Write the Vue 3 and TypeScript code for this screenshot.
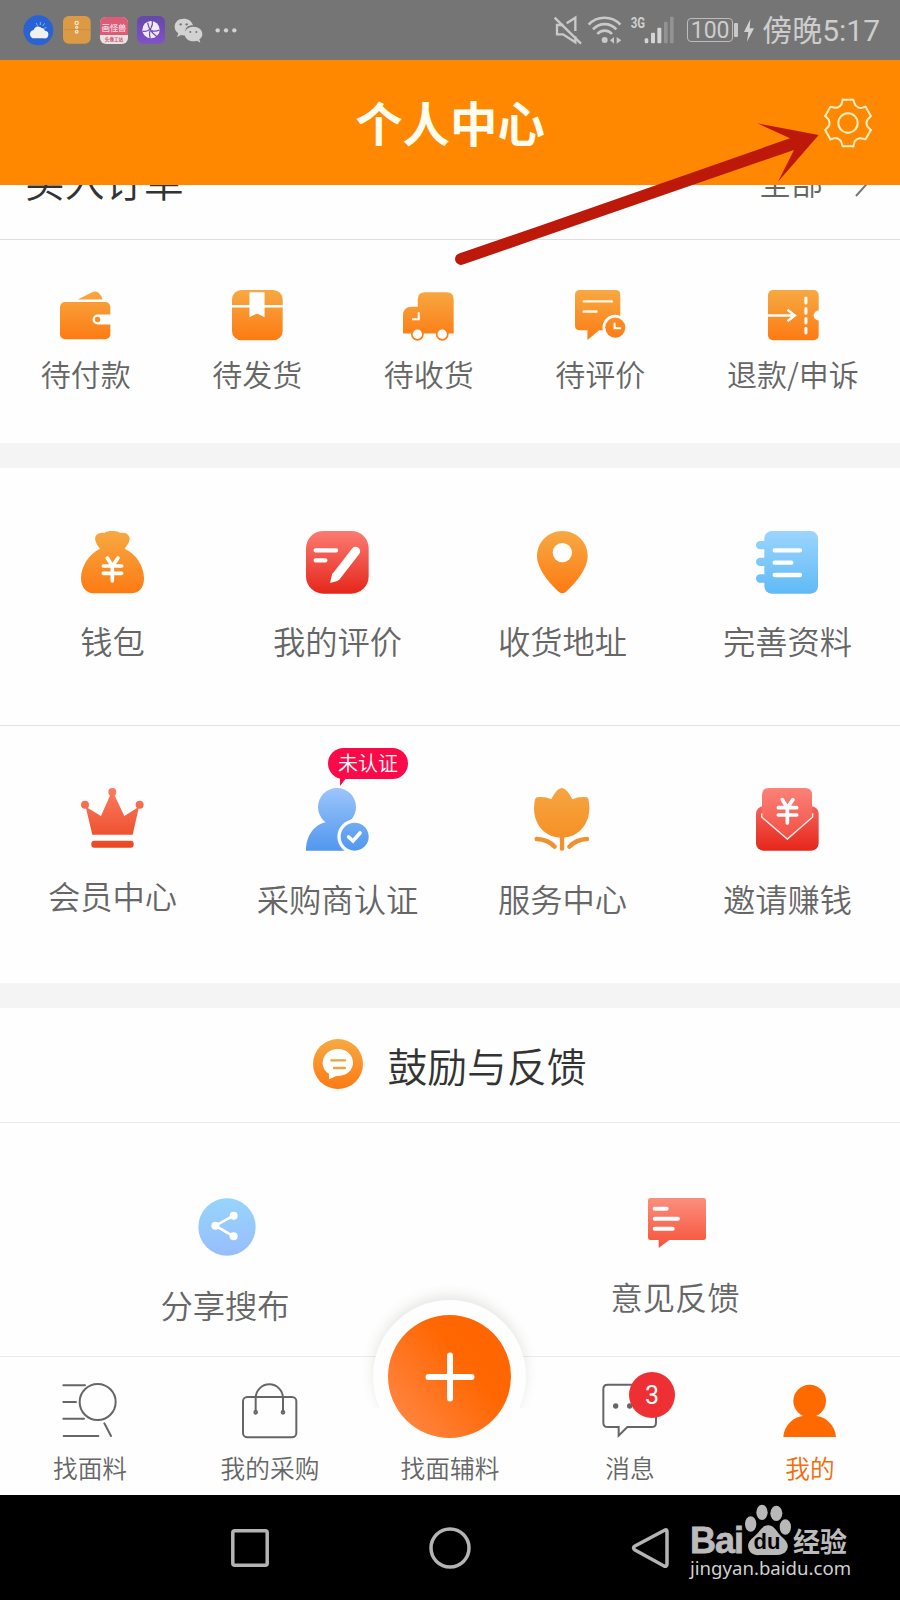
<script setup lang="ts">
interface Item {
  id: string
  label: string
  tag?: string
}

const orders: Item[] = [
  { id: 'wallet', label: '待付款' },
  { id: 'box', label: '待发货' },
  { id: 'truck', label: '待收货' },
  { id: 'comment', label: '待评价' },
  { id: 'ticket', label: '退款/申诉' },
]

const services: Item[][] = [
  [
    { id: 'bag', label: '钱包' },
    { id: 'review', label: '我的评价' },
    { id: 'pin', label: '收货地址' },
    { id: 'notebook', label: '完善资料' },
  ],
  [
    { id: 'crown', label: '会员中心' },
    { id: 'person', label: '采购商认证', tag: '未认证' },
    { id: 'tulip', label: '服务中心' },
    { id: 'envelope', label: '邀请赚钱' },
  ],
]

const tabs: Item[] = [
  { id: 'search', label: '找面料' },
  { id: 'cart', label: '我的采购' },
  { id: 'add', label: '找面辅料' },
  { id: 'message', label: '消息' },
  { id: 'me', label: '我的' },
]

const teeth = [0, 60, 120, 180, 240, 300]
</script>

<template>
  <div class="phone">
    <svg class="defs" width="0" height="0">
      <defs>
        <linearGradient id="g-orange-s" gradientUnits="userSpaceOnUse" x1="0" y1="0" x2="0" y2="150">
          <stop offset="0" stop-color="#f7a943" /><stop offset="1" stop-color="#fd7a12" />
        </linearGradient>
        <linearGradient id="g-orange" gradientUnits="userSpaceOnUse" x1="0" y1="0" x2="0" y2="188">
          <stop offset="0" stop-color="#f7a943" /><stop offset="1" stop-color="#fd7a12" />
        </linearGradient>
        <linearGradient id="g-amber" gradientUnits="userSpaceOnUse" x1="0" y1="0" x2="0" y2="188">
          <stop offset="0" stop-color="#f6a543" /><stop offset="1" stop-color="#f68c1e" />
        </linearGradient>
        <linearGradient id="g-red" gradientUnits="userSpaceOnUse" x1="0" y1="0" x2="0" y2="188">
          <stop offset="0" stop-color="#fc7b72" /><stop offset="1" stop-color="#e5261b" />
        </linearGradient>
        <linearGradient id="g-card" gradientUnits="userSpaceOnUse" x1="0" y1="0" x2="0" y2="188">
          <stop offset="0" stop-color="#fc8278" /><stop offset="1" stop-color="#ef4338" />
        </linearGradient>
        <linearGradient id="g-crown" gradientUnits="userSpaceOnUse" x1="0" y1="0" x2="0" y2="188">
          <stop offset="0" stop-color="#fb7b62" /><stop offset="1" stop-color="#ea451f" />
        </linearGradient>
        <linearGradient id="g-sky" gradientUnits="userSpaceOnUse" x1="0" y1="0" x2="0" y2="188">
          <stop offset="0" stop-color="#9bd5fd" /><stop offset="1" stop-color="#60baf6" />
        </linearGradient>
        <linearGradient id="g-blue" gradientUnits="userSpaceOnUse" x1="0" y1="0" x2="0" y2="188">
          <stop offset="0" stop-color="#9cc5fb" /><stop offset="1" stop-color="#5197ef" />
        </linearGradient>
        <linearGradient id="g-share" x1="0" y1="0" x2="0" y2="1">
          <stop offset="0" stop-color="#96d5fb" /><stop offset="1" stop-color="#98bdfd" />
        </linearGradient>
        <linearGradient id="g-coral" gradientUnits="userSpaceOnUse" x1="0" y1="0" x2="0" y2="150">
          <stop offset="0" stop-color="#fb8f7e" /><stop offset="1" stop-color="#f75238" />
        </linearGradient>
        <linearGradient id="g-purple" x1="0" y1="0" x2="0" y2="1">
          <stop offset="0" stop-color="#6448a8" /><stop offset="1" stop-color="#8250cc" />
        </linearGradient>
      </defs>
    </svg>

    <header class="status">
      <div class="status-apps">
        <svg width="31" height="31" viewBox="0 0 93 93">
          <circle cx="46" cy="46" r="45" fill="#2962d2" />
          <path d="M40 25l3 6M52 22v7M64 26l-4 6M69 38l-6 2" stroke="#8fb0ee" stroke-width="3" stroke-linecap="round" />
          <path d="M35 70a12.500 12.500 0 0 1-3-25a14 14 0 0 1 24-6a11 11 0 0 1 10 8a11.500 11.500 0 0 1-3 23z" fill="#f0f1ee" />
        </svg>
        <svg width="28" height="28" viewBox="0 0 84 84">
          <rect width="83" height="83" rx="17" fill="#dc9a45" />
          <path d="M2 41H82" stroke="#c78634" stroke-width="2" />
          <g fill="none" stroke="#eee2cc" stroke-width="4"><circle cx="41" cy="21" r="5" /><circle cx="41" cy="34" r="3" /><circle cx="41" cy="47" r="4" /></g>
        </svg>
        <div class="mini-app"><span class="mini-top">画怪兽</span><span class="mini-bottom">头像工站</span></div>
        <svg width="28" height="28" viewBox="0 0 84 84">
          <rect width="84" height="83" rx="17" fill="url(#g-purple)" />
          <circle cx="42" cy="41" r="26" fill="#efeaf6" />
          <path d="M18 46Q34 47 42 36Q48 26 46 15M32 20Q36 46 60 62M42 38Q34 52 40 66M44 44Q56 48 67 42" fill="none" stroke="#6d49b5" stroke-width="3.500" />
        </svg>
        <svg width="29" height="25" viewBox="0 0 87 75">
          <path d="M29 2C13 2 2 12 2 26c0 9 4 15 11 20l-4 11 12-6q7 2 14 1C28 32 42 20 57 22 54 10 43 2 29 2z" fill="#d2d2d2" />
          <path d="M58 26c-15 0-26 9-26 22s12 22 26 22q6 0 11-2l10 6-3-10c6-4 9-9 9-16 0-13-12-22-27-22z" fill="#d2d2d2" />
          <g fill="#757575"><circle cx="20" cy="19" r="3.5" /><circle cx="38" cy="19" r="3.5" /><circle cx="49" cy="42" r="3" /><circle cx="67" cy="42" r="3" /></g>
        </svg>
        <svg width="22" height="5" viewBox="0 0 66 15">
          <g fill="#d2d2d2"><circle cx="8" cy="7" r="6.5" /><circle cx="33" cy="7" r="6.5" /><circle cx="58" cy="7" r="6.5" /></g>
        </svg>
      </div>
      <div class="status-info">
        <svg width="120" height="30" viewBox="0 0 360 90">
          <g fill="none" stroke="#c9c9c9" stroke-width="7">
            <path d="M2 8L81 86" />
            <path d="M28 30H9v28h18l37 24V64M38 25L64 8V48" />
            <path d="M104 29a65 65 0 0 1 95 0M117 43a47 47 0 0 1 70 0M130 57a29 29 0 0 1 44 0" stroke-width="8" />
          </g>
          <circle cx="152" cy="75" r="9" fill="#c9c9c9" />
          <path d="M168 76l12-10v20zM188 66l14 10-14 10z" fill="#c9c9c9" />
          <g fill="#d4d4d4"><rect x="272" y="70" width="11" height="15" rx="4" /><rect x="291" y="53" width="12" height="32" rx="3" /><rect x="310" y="38" width="12" height="47" rx="3" /></g>
          <g fill="#939393"><rect x="330" y="20" width="11" height="65" rx="3" /><rect x="348" y="5" width="11" height="80" rx="3" /></g>
          <text class="net" x="230" y="38" textLength="43" lengthAdjust="spacingAndGlyphs">3G</text>
        </svg>
        <div class="battery">100</div>
        <i class="battery-cap"></i>
        <svg class="bolt" width="10" height="23" viewBox="0 0 30 69"><path d="M19 1L0 39h13L9 68 30 28H17z" fill="#d2d2d2" /></svg>
        <span class="clock">傍晚5:17</span>
      </div>
    </header>

    <div class="title-bar">
      <h1>个人中心</h1>
      <svg class="gear" width="50" height="50" viewBox="-75 -75 150 150">
        <g fill="none" stroke="#fff0c4" stroke-width="6" stroke-linecap="round" stroke-linejoin="round">
          <path v-for="angle in teeth" :key="angle" :transform="`rotate(${angle})`" d="M-16 -70H16L19 -60C22 -47 37 -42 46 -47L53 -49" />
          <circle r="29" />
        </g>
      </svg>
    </div>

    <main class="content">
      <div class="order-head">
        <span class="order-title">买入订单</span>
        <span class="order-all">全部</span>
        <svg class="chevron" width="16" height="32" viewBox="0 0 16 32"><path d="M2 1L15 15.500L2 30" fill="none" stroke="#777" stroke-width="2" /></svg>
      </div>

      <section class="orders">
        <div v-for="item in orders" :key="item.id" class="order">
          <svg width="51" height="51" viewBox="0 0 152 152">
            <g v-if="item.id === 'wallet'" fill="url(#g-orange-s)">
              <path d="M53 28L97 6Q108 2 116 9Q123 16 127 28Z" />
              <rect y="36" width="150" height="111" rx="15" />
              <path d="M152 73H112a15 15 0 0 0 0 30H152z" fill="#fff" />
              <circle cx="112" cy="88" r="8" fill="#f98b27" />
            </g>
            <g v-else-if="item.id === 'box'" fill="url(#g-orange-s)">
              <rect width="151" height="150" rx="28" />
              <path d="M0 45H151V52H0zM52 7H97V81L75 70L52 81z" fill="#fff" />
            </g>
            <g v-else-if="item.id === 'truck'" fill="url(#g-orange-s)">
              <path d="M0 130V76Q0 50 26 50H44V28Q44 7 66 7H130Q151 7 151 28V130z" />
              <circle cx="43" cy="132" r="19" /><circle cx="117" cy="132" r="19" />
              <circle cx="43" cy="132" r="14" fill="#fff" /><circle cx="117" cy="132" r="14" fill="#fff" />
              <path d="M47 66V87H27" fill="none" stroke="#fff" stroke-width="6" />
            </g>
            <g v-else-if="item.id === 'comment'" fill="url(#g-orange-s)">
              <path d="M14 0H121Q135 0 135 14V120H72L37 149V120H14Q0 120 0 106V14Q0 0 14 0z" />
              <path d="M26 34H110M26 64H64" stroke="#fff8e8" stroke-width="7" stroke-linecap="round" />
              <circle cx="120" cy="112" r="38" fill="#fefefe" /><circle cx="120" cy="112" r="30" />
              <path d="M118 100V114H135" fill="none" stroke="#fff" stroke-width="6" stroke-linecap="round" />
            </g>
            <g v-else fill="url(#g-orange-s)">
              <rect width="151" height="150" rx="15" />
              <circle cx="151" cy="76" r="15" fill="#fefefe" />
              <path d="M0 76H80M58 59L80 76L58 93" fill="none" stroke="#fff" stroke-width="7" />
              <path d="M113 24V39M113 55V69M113 85V98M113 114V128" stroke="#fff" stroke-width="9" stroke-linecap="round" />
            </g>
          </svg>
          <span>{{ item.label }}</span>
        </div>
      </section>

      <section v-for="(row, r) in services" :key="r" class="services">
        <div v-for="item in row" :key="item.id" class="service" :class="item.id">
          <svg width="63" height="63" viewBox="0 0 189 189">
            <g v-if="item.id === 'bag'">
              <path d="M57 53C48 42 40 29 43 18C47 6 62 4 70 6C80 -2 108 -2 118 6C130 3 145 8 146 22C146 35 137 45 131 53C165 68 189 105 189 142C189 170 175 187 150 187H38C15 187 0 168 0 142C0 105 25 68 57 53Z" fill="url(#g-orange)" />
              <path d="M79 81L94 105L111 81M67 105H122M67 127H122M94 105V150" fill="none" stroke="#fff" stroke-width="11" stroke-linecap="round" />
            </g>
            <g v-else-if="item.id === 'review'">
              <rect width="188" height="188" rx="52" fill="url(#g-red)" />
              <path d="M29 58H90M29 88H58" stroke="#fff" stroke-width="13" stroke-linecap="round" />
              <path d="M149 61L92 134" stroke="#fff" stroke-width="27" stroke-linecap="round" />
              <path d="M79 127L103 143L94 150L72 156z" fill="#fff" />
            </g>
            <g v-else-if="item.id === 'pin'">
              <path d="M94 0C136 0 170 33 170 75C170 115 130 160 104 183Q94 191 84 183C58 160 18 115 18 75C18 33 52 0 94 0Z" fill="url(#g-orange)" />
              <circle cx="94" cy="65" r="29" fill="#fff" />
            </g>
            <g v-else-if="item.id === 'notebook'" fill="url(#g-sky)">
              <rect x="25" width="161" height="188" rx="22" />
              <rect y="30" width="44" height="25" rx="12.5" /><rect y="80" width="44" height="25" rx="12.5" /><rect y="130" width="44" height="25" rx="12.5" />
              <path d="M56 58H132M56 95H106M56 132H132" stroke="#fff" stroke-width="13" stroke-linecap="round" />
            </g>
            <g v-else-if="item.id === 'crown'" fill="url(#g-crown)">
              <circle cx="94" cy="12" r="12" /><circle cx="12" cy="50" r="12" /><circle cx="176" cy="50" r="12" />
              <path d="M14 56L60 84L88 20H100L130 84L174 56L155 140H34z" />
              <rect x="31" y="158" width="127" height="21" rx="9" />
            </g>
            <g v-else-if="item.id === 'person'" fill="url(#g-blue)">
              <path d="M0 188C0 145 24 108 62 102C76 94 112 94 126 102V188z" />
              <circle cx="93" cy="57" r="57" />
              <circle cx="146" cy="146" r="52" fill="#fefefe" /><circle cx="146" cy="146" r="42" />
              <path d="M128 147L141 159L162 135" fill="none" stroke="#fff" stroke-width="11" stroke-linecap="round" />
            </g>
            <g v-else-if="item.id === 'tulip'" fill="url(#g-amber)">
              <path d="M92 0C106 2 117 19 124 34Q144 25 168 28Q174 28 175 60C175 112 140 149 92 149S9 112 9 60Q10 28 18 28Q42 25 61 34C68 19 79 2 92 0Z" />
              <path d="M93 140V182M17 153Q50 154 71 176M168 153Q136 154 115 176" fill="none" stroke="#f1902c" stroke-width="13" stroke-linecap="round" />
            </g>
            <g v-else>
              <rect y="55" width="188" height="133" rx="22" fill="url(#g-red)" />
              <path d="M18 86V20Q18 0 38 0H148Q168 0 168 20V86L94 152z" fill="url(#g-card)" />
              <path d="M17 76V87L94 153L170 87V76" fill="none" stroke="#fff0ee" stroke-width="4" />
              <path d="M79 35L94 59L111 35M67 59H122M67 81H122M94 59V105" fill="none" stroke="#fff" stroke-width="11" stroke-linecap="round" />
            </g>
          </svg>
          <span>{{ item.label }}</span>
          <em v-if="item.tag" class="tag">{{ item.tag }}</em>
        </div>
      </section>

      <div class="feedback-head">
        <svg width="50" height="50" viewBox="0 0 150 150">
          <circle cx="75" cy="75" r="75" fill="url(#g-orange-s)" />
          <path d="M75 30C101 30 120 48 120 71C120 95 99 112 70 111L48 121V104C36 97 29 85 29 71C29 48 49 30 75 30z" fill="#fff" />
          <path d="M55 64H96M63 87H96" stroke="#f3a03c" stroke-width="7" stroke-linecap="round" />
        </svg>
        <span>鼓励与反馈</span>
      </div>

      <section class="feedback">
        <div class="share">
          <svg width="58" height="58" viewBox="0 0 174 174">
            <circle cx="87" cy="87" r="86" fill="url(#g-share)" />
            <path d="M107 53L52 83L107 115" fill="none" stroke="#fff" stroke-width="8" />
            <g fill="#fff"><circle cx="107" cy="53" r="12" /><circle cx="52" cy="83" r="12" /><circle cx="107" cy="115" r="12" /></g>
          </svg>
          <span>分享搜布</span>
        </div>
        <div class="opinion">
          <svg width="58" height="50" viewBox="0 0 174 150">
            <path d="M7 0H167Q174 0 174 7V119Q174 126 167 126H64L32 150V126H7Q0 126 0 119V7Q0 0 7 0z" fill="url(#g-coral)" />
            <path d="M20 32H56M20 62H90M20 92H74" stroke="#fff" stroke-width="12" stroke-linecap="round" />
          </svg>
          <span>意见反馈</span>
        </div>
      </section>
    </main>

    <nav class="tabs">
      <div class="fab">
        <div class="fab-core">
          <svg width="50" height="50" viewBox="0 0 50 50"><path d="M25 3.500V46.500M3.500 25H46.500" stroke="#fff" stroke-width="6" stroke-linecap="round" /></svg>
        </div>
      </div>
      <div v-for="tab in tabs" :key="tab.id" class="tab" :class="{ active: tab.id === 'me' }">
        <div class="tab-icon">
          <svg v-if="tab.id !== 'add'" width="56" height="56" viewBox="0 0 168 168">
            <g v-if="tab.id === 'search'" fill="none" stroke="#666" stroke-width="6" stroke-linecap="round">
              <circle cx="107" cy="57" r="54" />
              <path d="M4 7H69M4 57H42M4 107H66M5 159H109M127 121L147 159" />
            </g>
            <g v-else-if="tab.id === 'cart'" fill="none" stroke="#666" stroke-width="6">
              <rect x="3" y="42" width="160" height="121" rx="13" />
              <path d="M41 86V45A41 41 0 0 1 123 45V86" />
              <circle cx="41" cy="88" r="4" /><circle cx="123" cy="88" r="4" />
            </g>
            <g v-else-if="tab.id === 'message'">
              <path d="M17 5H149Q162 5 162 18V119Q162 132 149 132H76L50 158V132H17Q4 132 4 119V18Q4 5 17 5z" fill="none" stroke="#666" stroke-width="6" />
              <g fill="#666"><circle cx="41" cy="69" r="8" /><circle cx="83" cy="69" r="8" /><circle cx="125" cy="69" r="8" /></g>
            </g>
            <g v-else fill="#ff6a00">
              <circle cx="83" cy="54" r="49" />
              <path d="M4 162C6 127 34 101 66 98V90H100V98C132 101 160 127 162 162z" />
            </g>
          </svg>
          <b v-if="tab.id === 'message'" class="badge">3</b>
        </div>
        <span>{{ tab.label }}</span>
      </div>
    </nav>

    <footer class="system-nav">
      <svg width="38" height="38" viewBox="0 0 38 38"><rect x="1.8" y="1.8" width="34.4" height="34.4" rx="2" /></svg>
      <svg width="42" height="42" viewBox="0 0 42 42"><circle cx="21" cy="21" r="19" /></svg>
      <svg width="38" height="42" viewBox="0 0 38 42"><path d="M34 3Q36 2 36 5V37Q36 40 33 39L4 23Q1 21 4 19Z" /></svg>
      <div class="watermark">
        <div class="brand">
          <span class="bai">Bai</span>
          <div class="paw">
            <svg width="48" height="52" viewBox="0 0 144 156">
              <g fill="#b8b8b8">
                <ellipse cx="20" cy="60" rx="17" ry="23" /><ellipse cx="54" cy="25" rx="17" ry="23" />
                <ellipse cx="97" cy="28" rx="18" ry="23" /><ellipse cx="124" cy="69" rx="17" ry="23" />
                <path d="M72 64C91 64 97 83 113 98C132 114 135 126 128 139C122 150 109 154 94 153H48C32 155 20 149 15 138C8 122 14 110 30 98C48 84 53 64 72 64z" />
              </g>
            </svg>
            <span class="du">du</span>
          </div>
          <span class="jingyan">经验</span>
        </div>
        <span class="url">jingyan.baidu.com</span>
      </div>
    </footer>

    <svg class="pointer" width="380" height="160" viewBox="450 115 380 160">
      <path d="M459 253.4L540 225.7L790 138.3L757.3 123.3L818.7 135L778 181.7L794 150L540 237.7L463 264.6A5.8 5.8 0 0 1 459 253.4Z" fill="#bc190a" />
    </svg>
  </div>
</template>

<style>
body {
  margin: 0;
  background: #fff;
}
</style>

<style scoped>
.phone {
  position: relative;
  display: flex;
  flex-direction: column;
  width: 900px;
  height: 1600px;
  overflow: hidden;
  background: #fefefe;
  color: #666;
  font-family: "Noto Sans CJK SC", sans-serif;
  font-weight: 350;
}
.phone svg {
  display: block;
  flex: none;
}
.phone .defs {
  position: absolute;
}

.status {
  display: flex;
  align-items: center;
  justify-content: space-between;
  flex: none;
  height: 60px;
  box-sizing: border-box;
  padding: 0 20px 0 23px;
  background: #757575;
}
.status-apps {
  display: flex;
  align-items: center;
  gap: 9px;
}
.status-apps svg:last-child {
  margin-left: 3px;
}
.mini-app {
  display: flex;
  flex-direction: column;
  width: 28px;
  height: 27px;
  overflow: hidden;
  border-radius: 6px;
  background: #e8e2e2;
  text-align: center;
  white-space: nowrap;
}
.mini-top {
  height: 18px;
  background: #dc5c78;
  color: #f4dfe3;
  font-size: 8.2px;
  font-weight: 500;
  line-height: 20px;
}
.mini-bottom {
  color: #d0586c;
  font-size: 4.6px;
  font-weight: 700;
  line-height: 9px;
}
.status-info {
  display: flex;
  align-items: center;
  color: #cdcdcd;
}
.net {
  fill: #d0d0d0;
  font: bold 45px "Roboto", sans-serif;
}
.battery {
  width: 44px;
  height: 22px;
  margin-left: 13px;
  border: 1.5px solid #bcbcbc;
  border-radius: 4px;
  font: 400 23px/23px "Roboto", sans-serif;
  text-align: center;
}
.battery-cap {
  width: 4px;
  height: 14px;
  margin: 0 6px 0 1px;
  border-radius: 1px;
  background: #c8c8c8;
}
.clock {
  margin: 2px 0 0 8px;
  font: 400 30px/40px "Roboto", "Noto Sans CJK SC", sans-serif;
  white-space: nowrap;
}

.title-bar {
  display: grid;
  grid-template-columns: 1fr auto 1fr;
  align-items: center;
  flex: none;
  height: 125px;
  box-sizing: border-box;
  padding: 0 27px 0 27px;
  background: #ff8800;
}
.title-bar h1 {
  grid-column: 2;
  margin: -1px 0 0;
  color: #fffdf0;
  font-size: 47.4px;
  font-weight: 700;
  line-height: 60px;
}
.gear {
  justify-self: end;
}

.content {
  display: flex;
  flex-direction: column;
  height: 1171px;
  overflow: hidden;
}
.order-head {
  display: flex;
  align-items: flex-end;
  flex: none;
  height: 55px;
  box-sizing: border-box;
  padding: 0 28px 30px 25px;
  border-bottom: 1px solid #dedede;
}
.order-title {
  margin: 0 auto 4px 0;
  color: #333;
  font-size: 39.7px;
  line-height: 50px;
}
.order-all {
  margin-bottom: 3px;
  font-size: 32px;
  line-height: 50px;
}
.chevron {
  margin: 0 2px 11px 31px;
}

.orders {
  display: flex;
  flex: none;
  height: 203px;
}
.order {
  display: flex;
  flex-direction: column;
  align-items: center;
  width: 171.5px;
  padding-top: 50px;
  font-size: 30px;
  line-height: 40px;
}
.order:last-child {
  flex: 1;
}
.order span {
  margin-top: 12px;
}

.services {
  display: flex;
  flex: none;
  height: 257px;
}
.orders + .services {
  border-top: 25px solid #f4f4f4;
  border-bottom: 1px solid #e2e2e2;
}
.service {
  position: relative;
  display: flex;
  flex-direction: column;
  align-items: center;
  width: 225px;
  padding-top: 63px;
  font-size: 32.3px;
  line-height: 44px;
}
.services + .services .service {
  padding-top: 62px;
}
.service > span {
  margin-top: 24px;
}
.services + .services .service > span {
  margin-top: 25px;
}
.services + .services .crown > span {
  margin-top: 22px;
}
.tag {
  position: absolute;
  top: 22px;
  left: 103px;
  width: 80px;
  height: 31px;
  border-radius: 16px;
  background: #fb0a4a;
  color: #fff;
  font-size: 20px;
  font-style: normal;
  line-height: 30px;
  text-align: center;
}
.tag::after {
  content: "";
  position: absolute;
  top: 29px;
  left: 12px;
  width: 7px;
  height: 9px;
  background: #fb0a4a;
  clip-path: polygon(0 0, 100% 0, 0 100%);
}

.feedback-head {
  display: flex;
  align-items: center;
  justify-content: center;
  flex: none;
  height: 114px;
  gap: 25px;
  padding-right: 1px;
  border-top: 25px solid #f4f4f4;
  border-bottom: 1px solid #ebebeb;
  color: #333;
  font-size: 39.8px;
  line-height: 50px;
}
.feedback-head svg {
  margin-bottom: 2px;
}
.feedback-head span {
  margin-bottom: 1px;
}
.feedback {
  display: flex;
}
.feedback > div {
  display: flex;
  flex-direction: column;
  align-items: center;
  width: 450px;
  padding-top: 75px;
  font-size: 32.3px;
  line-height: 44px;
}
.feedback svg {
  margin-left: 3px;
}
.share span,
.opinion span {
  margin-top: 26px;
}

.tabs {
  position: relative;
  display: flex;
  flex: none;
  height: 139px;
  box-sizing: border-box;
  border-top: 1px solid #ebebeb;
  background: #fefefe;
}
.tab {
  display: flex;
  flex-direction: column;
  align-items: center;
  width: 180px;
  padding-top: 26px;
  font-size: 24.7px;
  line-height: 34px;
}
.tab-icon {
  position: relative;
  width: 56px;
  height: 56px;
}
.tab span {
  position: relative;
  margin-top: 11px;
}
.tab.active {
  color: #f46c0a;
}
.badge {
  position: absolute;
  top: -11px;
  left: 27px;
  width: 46px;
  height: 46px;
  border-radius: 50%;
  background: #ee2f33;
  color: #fff;
  font: 400 25px/47px "Roboto", sans-serif;
  text-align: center;
}
.fab {
  position: absolute;
  top: -57px;
  left: 373px;
  display: flex;
  align-items: center;
  justify-content: center;
  width: 153px;
  height: 153px;
}
.fab::before {
  content: "";
  position: absolute;
  inset: 0;
  border-radius: 50%;
  background: #fefefe;
  box-shadow: 0 -5px 13px -1px rgba(90, 80, 60, 0.15);
  clip-path: inset(-30px -30px 45px);
}
.fab-core {
  position: relative;
  display: flex;
  align-items: center;
  justify-content: center;
  width: 123px;
  height: 123px;
  border-radius: 50%;
  background: linear-gradient(50deg, #ff8848 5%, #ff6702 62%, #ff6400);
}

.system-nav {
  position: relative;
  display: flex;
  align-items: center;
  flex: none;
  height: 105px;
  padding-left: 231px;
  background: #000;
}
.system-nav > svg {
  fill: none;
  stroke: #b4b4b4;
  stroke-width: 3.5;
}
.system-nav > svg:nth-child(2) {
  margin-left: 160px;
}
.system-nav > svg:nth-child(3) {
  margin-left: 160px;
}
.watermark {
  position: absolute;
  top: 9px;
  left: 690px;
  width: 165px;
  color: #bbb;
}
.brand {
  display: flex;
  align-items: flex-end;
  height: 52px;
}
.bai {
  width: 54px;
  font: bold 36px/31px "Liberation Sans", sans-serif;
  letter-spacing: -1px;
  -webkit-text-stroke: 0.8px #bbb;
}
.paw {
  position: relative;
  width: 48px;
  height: 52px;
}
.du {
  position: absolute;
  left: 0;
  bottom: 0;
  width: 46px;
  color: #000;
  font: bold 22px/28px "Liberation Sans", sans-serif;
  text-align: center;
}
.jingyan {
  margin-left: 1px;
  font-size: 27px;
  font-weight: 700;
  line-height: 30px;
}
.url {
  display: block;
  margin-top: 1px;
  color: #d0d0d0;
  font: 400 18.6px/22px "Noto Sans", sans-serif;
  white-space: nowrap;
}

.pointer {
  position: absolute;
  top: 115px;
  left: 450px;
  z-index: 5;
}
</style>
